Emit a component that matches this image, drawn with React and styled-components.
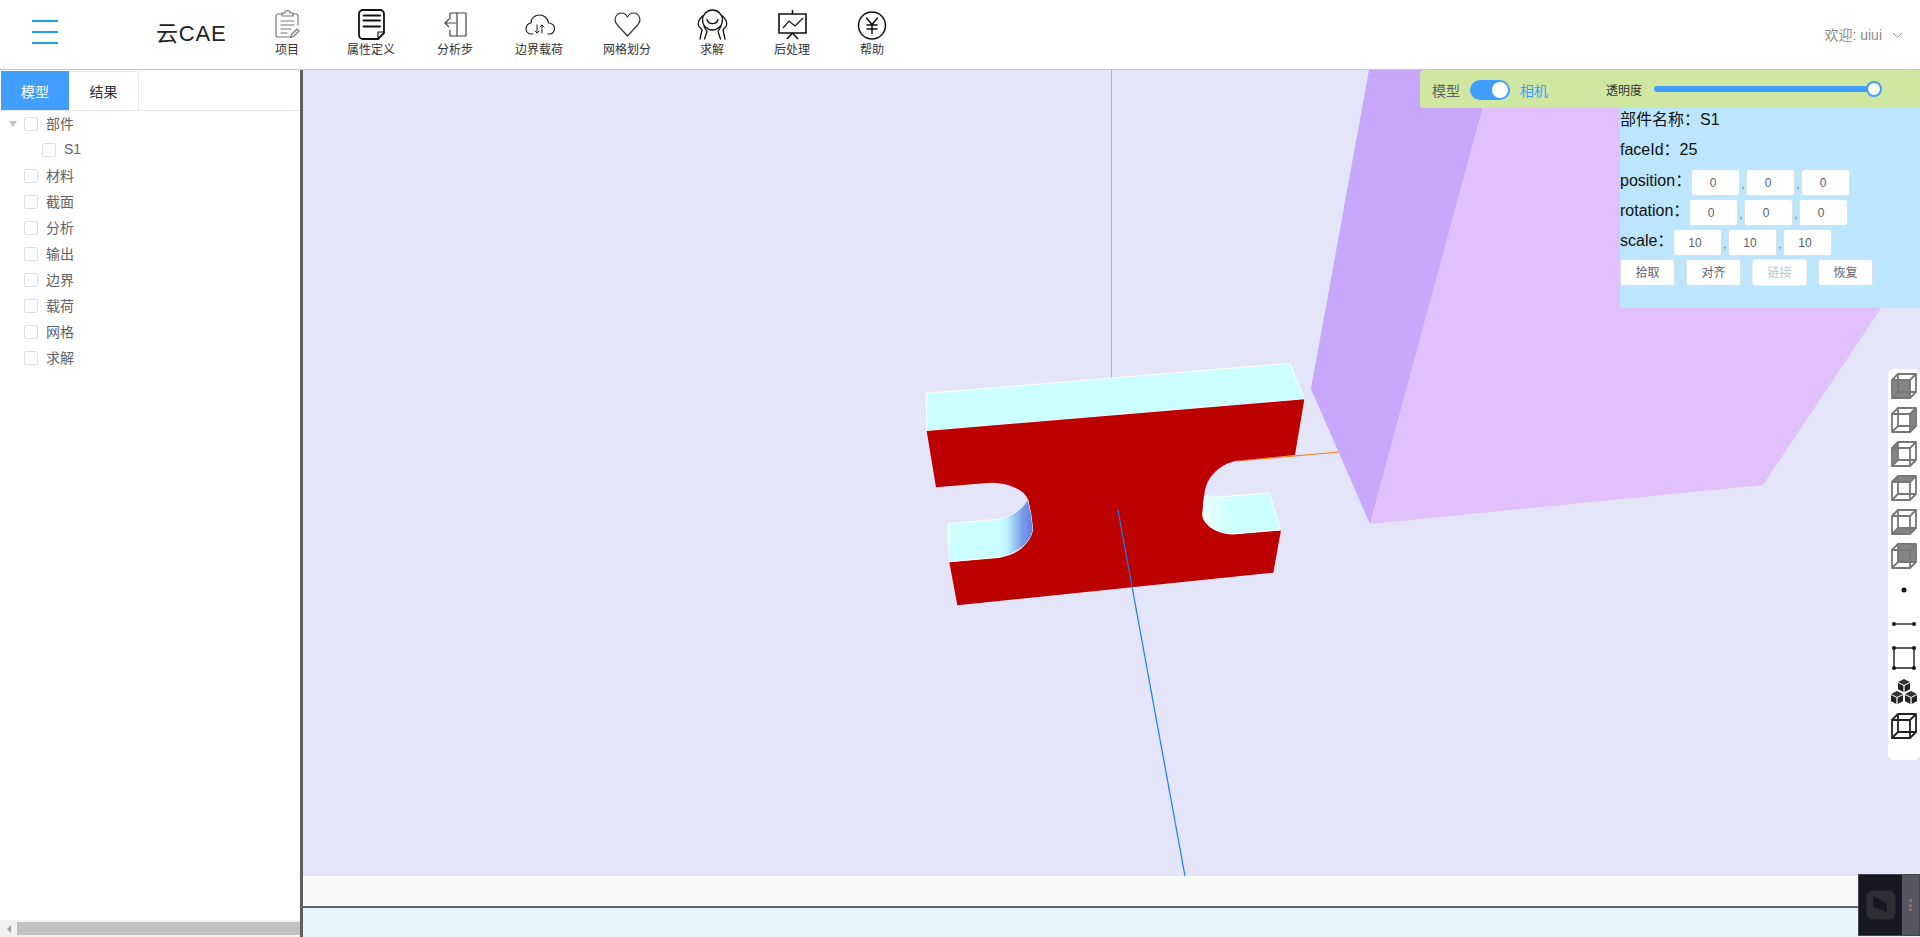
import React from "react";
import styled, { createGlobalStyle } from "styled-components";

const GlobalStyle = createGlobalStyle`
  html, body {
    margin: 0;
    padding: 0;
    overflow: hidden;
    background: #fff;
    font-family: "Liberation Sans", "Noto Sans CJK SC", sans-serif;
  }
  * { box-sizing: border-box; }
`;

const Page = styled.div`
  width: 1920px;
  height: 937px;
  display: flex;
  flex-direction: column;
  position: relative;
  overflow: hidden;
`;

/* header */
const Header = styled.header`
  height: 70px;
  flex: none;
  display: flex;
  align-items: flex-start;
  border-bottom: 1px solid #c4c4c4;
  background: #fff;
`;

const Burger = styled.div`
  width: 26px;
  margin: 20px 0 0 32px;
  display: flex;
  flex-direction: column;
  gap: 9px;
  span {
    height: 2px;
    background: #1f9fe2;
  }
`;

const Logo = styled.div`
  margin: 21px 0 0 98px;
  width: 89px;
  font-size: 22px;
  line-height: 26px;
  letter-spacing: 0.8px;
  color: #222;
`;

const Nav = styled.nav`
  display: flex;
`;

const NavItem = styled.div`
  width: ${(p) => p.$w}px;
  padding-top: 8px;
  display: flex;
  flex-direction: column;
  align-items: center;
  font-size: 12px;
  line-height: 17px;
  color: #333;
  svg {
    display: block;
    margin-bottom: 1px;
  }
`;

const User = styled.div`
  margin: 27px 17px 0 auto;
  display: flex;
  align-items: center;
  gap: 10px;
  font-size: 14px;
  line-height: 17px;
  color: #8c8c8c;
`;

/* body */
const Main = styled.div`
  flex: 1;
  display: flex;
  min-height: 0;
`;

const Sidebar = styled.aside`
  width: 303px;
  flex: none;
  display: flex;
  flex-direction: column;
  border-right: 3px solid #5f5f5f;
  background: #fff;
`;

const Tabs = styled.div`
  height: 41px;
  flex: none;
  display: flex;
  padding: 1px 0 0 1px;
  border-bottom: 1px solid #e4e7ed;
`;

const Tab = styled.div`
  width: ${(p) => (p.$active ? 68 : 70)}px;
  display: flex;
  align-items: center;
  justify-content: center;
  font-size: 14px;
  color: ${(p) => (p.$active ? "#fff" : "#303133")};
  background: ${(p) => (p.$active ? "#409eff" : "#fff")};
  border-right: ${(p) => (p.$active ? "none" : "1px solid #e4e7ed")};
  border-top: ${(p) => (p.$active ? "none" : "1px solid #e4e7ed")};
  border-top-right-radius: ${(p) => (p.$active ? 0 : 4)}px;
`;

const Tree = styled.div`
  flex: 1;
  min-height: 0;
`;

const TreeRow = styled.div`
  height: 26px;
  display: flex;
  align-items: center;
  padding-left: ${(p) => 9 + p.$level * 18}px;
  font-size: 14px;
  color: #606266;
`;

const TreeLabel = styled.span`
  margin-bottom: 2px;
`;

const Caret = styled.span`
  width: 15px;
  flex: none;
  display: block;
  height: 6px;
  &::before {
    content: "";
    display: ${(p) => (p.$show ? "block" : "none")};
    width: 0;
    height: 0;
    border-left: 4px solid transparent;
    border-right: 4px solid transparent;
    border-top: 6px solid #c0c4cc;
  }
`;

const Check = styled.span`
  width: 14px;
  height: 14px;
  flex: none;
  margin-right: 8px;
  background: #fff;
  border: 1px solid #dcdfe6;
  border-radius: 2px;
`;

const Scrollbar = styled.div`
  height: 17px;
  flex: none;
  display: flex;
  align-items: center;
  background: #f1f1f1;
`;

const ScrollArrow = styled.span`
  width: 17px;
  flex: none;
  display: flex;
  justify-content: center;
  &::before {
    content: "";
    border-top: 4px solid transparent;
    border-bottom: 4px solid transparent;
    border-right: 4px solid #a3a3a3;
  }
`;

const ScrollThumb = styled.span`
  flex: 1;
  height: 13px;
  background: #c1c1c1;
`;

const Work = styled.div`
  flex: 1;
  min-width: 0;
  display: flex;
  flex-direction: column;
`;

const Viewport = styled.div`
  flex: 1;
  min-height: 0;
  position: relative;
  overflow: hidden;
  background: #e5e5f9;
`;

const Scene = styled.svg`
  position: absolute;
  left: 0;
  top: 0;
  display: block;
`;

const StatusStrip = styled.div`
  height: 32px;
  flex: none;
  background: #fafafa;
  border-bottom: 2px solid #666;
`;

const Console = styled.div`
  height: 29px;
  flex: none;
  background: #e6f4fd;
`;

/* overlays on the viewport */
const ViewDock = styled.div`
  position: absolute;
  right: 0;
  top: 0;
  width: 500px;
  display: flex;
  flex-direction: column;
  align-items: flex-end;
`;

const ControlBar = styled.div`
  width: 500px;
  height: 38px;
  display: flex;
  align-items: center;
  padding: 2px 0 0 12px;
  background: #cfe7a1;
  border-radius: 4px;
  font-size: 14px;
  color: #606266;
`;

const SwitchLabel = styled.span`
  color: ${(p) => (p.$on ? "#409eff" : "#606266")};
`;

const Switch = styled.span`
  width: 40px;
  height: 20px;
  margin: 0 10px;
  padding: 2px;
  display: flex;
  justify-content: flex-end;
  background: #409eff;
  border-radius: 10px;
  &::after {
    content: "";
    width: 16px;
    height: 16px;
    background: #fff;
    border-radius: 50%;
  }
`;

const SliderLabel = styled.span`
  margin: 0 12px 2px 58px;
  font-size: 12px;
  color: #333;
`;

const Slider = styled.span`
  width: 228px;
  height: 6px;
  margin-bottom: 2px;
  position: relative;
  background: #409eff;
  border-radius: 3px;
`;

const SliderKnob = styled.span`
  position: absolute;
  right: 0;
  top: -5px;
  width: 16px;
  height: 16px;
  background: #fff;
  border: 2px solid #409eff;
  border-radius: 50%;
`;

const InfoPanel = styled.div`
  width: 300px;
  height: 200px;
  display: flex;
  flex-direction: column;
  background: #bbe6fe;
  color: #111;
  font-size: 16px;
`;

const InfoLine = styled.div`
  height: 30px;
  line-height: 24px;
`;

const FieldRow = styled.div`
  height: 30px;
  padding-top: 1px;
  display: flex;
  align-items: flex-start;
  line-height: 24px;
`;

const FieldLabel = styled.span`
  width: ${(p) => p.$w}px;
  flex: none;
`;

const FieldInput = styled.span`
  width: 49px;
  height: 27px;
  display: flex;
  align-items: center;
  justify-content: center;
  padding-right: 5px;
  background: #fff;
  border: 1px solid #dcdfe6;
  border-radius: 3px;
  font-size: 12px;
  color: #606266;
`;

const Comma = styled.span`
  width: 6px;
  font-size: 10px;
  line-height: 32px;
  text-align: center;
  color: #606266;
`;

const ActionRow = styled.div`
  display: flex;
  gap: 11px;
  padding-top: 1px;
`;

const ActionButton = styled.span`
  width: 55px;
  height: 27px;
  padding-bottom: 2px;
  display: flex;
  align-items: center;
  justify-content: center;
  background: #fff;
  border: 1px solid ${(p) => (p.$disabled ? "#ebeef5" : "#dcdfe6")};
  border-radius: 3px;
  font-size: 12px;
  color: ${(p) => (p.$disabled ? "#c0c4cc" : "#606266")};
`;

const ViewTools = styled.div`
  position: absolute;
  right: 0;
  top: 299px;
  width: 32px;
  padding-bottom: 17px;
  display: flex;
  flex-direction: column;
  background: #fff;
  border-radius: 6px;
`;

const ToolSlot = styled.div`
  height: 34px;
  display: flex;
  align-items: center;
  justify-content: center;
`;

/* corner widget over everything */
const RecorderWidget = styled.div`
  position: absolute;
  right: 0;
  bottom: 1px;
  width: 62px;
  height: 62px;
  display: flex;
  background: #17181f;
  border: 1px solid #45464d;
`;

const RecorderMain = styled.div`
  flex: 1;
  display: flex;
  align-items: center;
  justify-content: center;
`;

const RecorderHandle = styled.div`
  width: 17px;
  display: flex;
  flex-direction: column;
  align-items: center;
  justify-content: center;
  gap: 1.5px;
  background: #555662;
  span {
    width: 3px;
    height: 3px;
    background: #a5705a;
    border-radius: 50%;
  }
`;

const navStroke = { fill: "none", stroke: "#2b2b2b", strokeWidth: 1.2, strokeLinecap: "round", strokeLinejoin: "round" };

const navIcons = {
  project: (
    <g {...navStroke} stroke="#777">
      <path d="M11 6H7a2 2 0 0 0-2 2v19a2 2 0 0 0 2 2h12" />
      <path d="M22 6h3a2 2 0 0 1 2 2v9" />
      <path d="M11 8V5h3a2.5 2.5 0 0 1 5 0h3v3z" />
      <path d="M10 13h13M10 17h13M10 21h10M10 25h6" />
      <path d="M19.500 29.500l1-3 5.500-5.500 2 2-5.500 5.500z" />
    </g>
  ),
  attr: (
    <g {...navStroke} stroke="#111" strokeWidth="1.8">
      <path d="M8 2h17a4 4 0 0 1 4 4v19l-6 6H8a4 4 0 0 1-4-4V6a4 4 0 0 1 4-4z" />
      <path d="M8.500 7.500h16.500M8.500 12.500h16.500M8.500 18.500h16.500" />
      <path d="M23 30v-6h6" strokeWidth="1.2" />
    </g>
  ),
  step: (
    <g {...navStroke} stroke="#444">
      <path d="M11 11V5h16v23H11v-6" />
      <path d="M18 5v23" />
      <path d="M6 15h11M6 15l3.500-3.500M6 15l3.500 3.500" />
    </g>
  ),
  load: (
    <g {...navStroke} stroke="#222">
      <path d="M10 26H8c-3.500 0-5-3-5-5.500S5 15 8 15c0-5 4-8 8.500-8S25 10.500 25.500 15c3.500 0 6 2.500 6 5.500S29.500 26 27 26h-2" />
      <path d="M14 17v8M12 23l2 2 2-2M19 25v-8M17 19l2-2 2 2" strokeWidth="1" />
    </g>
  ),
  mesh: (
    <path {...navStroke} stroke="#333" d="M16.500 28L6 16.500C2 11.500 5 5 10.500 5c2.800 0 4.800 1.800 6 4 1.200-2.200 3.200-4 6-4C28 5 31 11.500 27 16.500z" />
  ),
  solve: (
    <g {...navStroke} stroke="#111" strokeWidth="1.3">
      <circle cx="16.500" cy="12" r="10" />
      <path d="M11 11.500c1.500 5.500 9.500 5.500 11 0" />
      <path d="M6.500 8C3 11 1 15.500 3 18.500c.8 1.300 2.500 1.800 3 3.500l-2 9" />
      <path d="M8 18.500l3 5-2.500 7.500" />
      <path d="M26.500 8C30 11 32 15.500 30 18.500c-.8 1.300-2.500 1.800-3 3.500l2 9" />
      <path d="M25 18.500l-3 5 2.500 7.500" />
    </g>
  ),
  post: (
    <g {...navStroke} stroke="#111" strokeWidth="1.6" strokeLinecap="butt" strokeLinejoin="miter">
      <path d="M3 6h27v19H3z" />
      <path d="M16.500 2v4M16.500 25l-5.500 6M16.500 25l5.500 6" />
      <path d="M7 20l6-7 6 5 8-8" strokeWidth="1.2" />
    </g>
  ),
  help: (
    <g {...navStroke} stroke="#111" strokeWidth="1.5">
      <circle cx="16" cy="17.500" r="13.500" />
      <path d="M10.500 10L16 16.500l5.500-6.500M11 17h10M11 21h10M16 16.500v9" />
    </g>
  ),
};

const navList = [
  ["项目", 84, "project"],
  ["属性定义", 84, "attr"],
  ["分析步", 84, "step"],
  ["边界载荷", 84, "load"],
  ["网格划分", 92, "mesh"],
  ["求解", 78, "solve"],
  ["后处理", 82, "post"],
  ["帮助", 78, "help"],
];

const treeList = [
  ["部件", 0, true],
  ["S1", 1],
  ["材料", 0],
  ["截面", 0],
  ["分析", 0],
  ["输出", 0],
  ["边界", 0],
  ["载荷", 0],
  ["网格", 0],
  ["求解", 0],
];

const faces = {
  front: "1,7 19,7 19,25 1,25",
  back: "7,1 25,1 25,19 7,19",
  right: "19,7 25,1 25,19 19,25",
  left: "1,7 7,1 7,19 1,25",
  top: "1,7 7,1 25,1 19,7",
  bottom: "1,25 7,19 25,19 19,25",
};

const Cube = ({ face, color = "#777", width = 1.8 }) => (
  <svg width="26" height="26" viewBox="0 0 26 26">
    {face && <polygon points={faces[face]} fill="#858585" />}
    <g fill="none" stroke={color} strokeWidth={width} strokeLinejoin="round">
      <path d="M7 1h18v18H7z" />
      <path d="M1 7h18v18H1z" />
      <path d="M1 7l6-6M19 7l6-6M19 25l6-6M1 25l6-6" />
    </g>
  </svg>
);

const PointIcon = () => (
  <svg width="26" height="26" viewBox="0 0 26 26">
    <circle cx="13" cy="13" r="2.500" fill="#111" />
  </svg>
);

const EdgeIcon = () => (
  <svg width="26" height="26" viewBox="0 0 26 26">
    <path d="M3 13h20" stroke="#222" strokeWidth="1.4" />
    <circle cx="3" cy="13" r="2" fill="#111" />
    <circle cx="23" cy="13" r="2" fill="#111" />
  </svg>
);

const FaceIcon = () => (
  <svg width="26" height="26" viewBox="0 0 26 26">
    <path d="M3 3h20v20H3z" fill="none" stroke="#222" strokeWidth="1.4" />
    <circle cx="3" cy="3" r="2" fill="#111" />
    <circle cx="23" cy="3" r="2" fill="#111" />
    <circle cx="3" cy="23" r="2" fill="#111" />
    <circle cx="23" cy="23" r="2" fill="#111" />
  </svg>
);

const SmallCube = ({ x, y }) => (
  <g transform={`translate(${x} ${y})`}>
    <path d="M6 0l6 3-6 3-6-3z" fill="#333" />
    <path d="M0 4l5.400 2.700V13L0 10.300z" fill="#222" />
    <path d="M12 4L6.600 6.700V13L12 10.300z" fill="#222" />
  </g>
);

const BodiesIcon = () => (
  <svg width="26" height="26" viewBox="0 0 26 26">
    <SmallCube x={7} y={0} />
    <SmallCube x={0} y={12} />
    <SmallCube x={14} y={12} />
  </svg>
);

const Model = () => (
  <g transform="translate(-303 -70)">
    <polygon points="1369,70 1493,70 1370,524 1311,389" fill="#c7a8fc" />
    <polygon points="1493,70 1920,70 1920,250 1763,485 1370,524" fill="#e2c0fe" />
    <line x1="1111.500" y1="70" x2="1111.500" y2="378" stroke="#93d84a" strokeWidth="1" />
    <line x1="1237" y1="461" x2="1339" y2="452" stroke="#f5821f" strokeWidth="1.2" />
    <g transform="translate(900 340) scale(0.33333)" strokeLinejoin="round">
      <defs>
        <linearGradient id="leftSlot" x1="295" x2="398" y1="0" y2="0" gradientUnits="userSpaceOnUse">
          <stop offset="0" stopColor="#ccffff" />
          <stop offset="0.25" stopColor="#bdf2ff" />
          <stop offset="0.7" stopColor="#7a9cea" />
          <stop offset="1" stopColor="#5f80e0" />
        </linearGradient>
        <linearGradient id="rightSlot" x1="908" x2="1000" y1="0" y2="0" gradientUnits="userSpaceOnUse">
          <stop offset="0" stopColor="#ebffff" />
          <stop offset="1" stopColor="#ccffff" />
        </linearGradient>
      </defs>
      <polygon points="79,160 1170,70 1213,178 80,273" fill="#ccffff" stroke="#fff" strokeWidth="3" />
      <path
        d="M80 273L1213 178 1185 345 1010 362C960 372 916 410 913 468L908 525C912 560 960 582 1000 582L1143 570 1120 698 172 796 148 667 300 652C340 648 385 625 398 567L385 480C370 445 320 428 270 428L108 442Z"
        fill="#bc0000"
      />
      <path
        d="M145 551L295 538C330 532 365 512 383 480L392 520 398 567C392 610 355 635 300 652L148 665Z"
        fill="#ccffff"
        stroke="#fff"
        strokeWidth="3"
      />
      <path d="M295 538C330 532 365 512 383 480L392 520 398 567C392 610 355 635 300 652Z" fill="url(#leftSlot)" />
      <path
        d="M913 468L970 470 1108 459 1143 570 1000 582C960 582 912 560 908 525Z"
        fill="#ccffff"
        stroke="#fff"
        strokeWidth="3"
      />
      <path d="M913 468L970 470 1000 582C960 582 912 560 908 525Z" fill="url(#rightSlot)" />
    </g>
    <line x1="1185" y1="876" x2="1118" y2="510" stroke="#1a7ff0" strokeWidth="1.2" />
  </g>
);

export default function App() {
  return (
    <Page>
      <GlobalStyle />
      <Header>
        <Burger>
          <span />
          <span />
          <span />
        </Burger>
        <Logo>云CAE</Logo>
        <Nav>
          {navList.map(([label, w, icon]) => (
            <NavItem key={label} $w={w}>
              <svg width="33" height="33" viewBox="0 0 33 33">
                {navIcons[icon]}
              </svg>
              {label}
            </NavItem>
          ))}
        </Nav>
        <User>
          欢迎: uiui
          <svg width="11" height="7" viewBox="0 0 11 7">
            <path d="M1 1l4.500 4.500L10 1" fill="none" stroke="#909399" strokeWidth="1" />
          </svg>
        </User>
      </Header>
      <Main>
        <Sidebar>
          <Tabs>
            <Tab $active>模型</Tab>
            <Tab>结果</Tab>
          </Tabs>
          <Tree>
            {treeList.map(([label, level, open]) => (
              <TreeRow key={label} $level={level}>
                <Caret $show={open} />
                <Check />
                <TreeLabel>{label}</TreeLabel>
              </TreeRow>
            ))}
          </Tree>
          <Scrollbar>
            <ScrollArrow />
            <ScrollThumb />
          </Scrollbar>
        </Sidebar>
        <Work>
          <Viewport>
            <Scene width="1617" height="806" viewBox="0 0 1617 806">
              <Model />
            </Scene>
            <ViewDock>
              <ControlBar>
                <SwitchLabel>模型</SwitchLabel>
                <Switch />
                <SwitchLabel $on>相机</SwitchLabel>
                <SliderLabel>透明度</SliderLabel>
                <Slider>
                  <SliderKnob />
                </Slider>
              </ControlBar>
              <InfoPanel>
                <InfoLine>部件名称：S1</InfoLine>
                <InfoLine>faceId：25</InfoLine>
                <FieldRow>
                  <FieldLabel $w={71}>position：</FieldLabel>
                  <FieldInput>0</FieldInput>
                  <Comma>,</Comma>
                  <FieldInput>0</FieldInput>
                  <Comma>,</Comma>
                  <FieldInput>0</FieldInput>
                </FieldRow>
                <FieldRow>
                  <FieldLabel $w={69}>rotation：</FieldLabel>
                  <FieldInput>0</FieldInput>
                  <Comma>,</Comma>
                  <FieldInput>0</FieldInput>
                  <Comma>,</Comma>
                  <FieldInput>0</FieldInput>
                </FieldRow>
                <FieldRow>
                  <FieldLabel $w={53}>scale：</FieldLabel>
                  <FieldInput>10</FieldInput>
                  <Comma>,</Comma>
                  <FieldInput>10</FieldInput>
                  <Comma>,</Comma>
                  <FieldInput>10</FieldInput>
                </FieldRow>
                <ActionRow>
                  <ActionButton>拾取</ActionButton>
                  <ActionButton>对齐</ActionButton>
                  <ActionButton $disabled>链接</ActionButton>
                  <ActionButton>恢复</ActionButton>
                </ActionRow>
              </InfoPanel>
            </ViewDock>
            <ViewTools>
              {["front", "right", "left", "top", "bottom", "back"].map((face) => (
                <ToolSlot key={face}>
                  <Cube face={face} />
                </ToolSlot>
              ))}
              <ToolSlot>
                <PointIcon />
              </ToolSlot>
              <ToolSlot>
                <EdgeIcon />
              </ToolSlot>
              <ToolSlot>
                <FaceIcon />
              </ToolSlot>
              <ToolSlot>
                <BodiesIcon />
              </ToolSlot>
              <ToolSlot>
                <Cube color="#222" />
              </ToolSlot>
            </ViewTools>
          </Viewport>
          <StatusStrip />
          <Console />
        </Work>
      </Main>
      <RecorderWidget>
        <RecorderMain>
          <svg width="30" height="30" viewBox="0 0 30 30">
            <rect width="29" height="29" x="0.500" y="0.500" rx="7" fill="#2e2f35" />
            <path d="M7 6l14 7-14 5z" fill="#17181f" />
            <path d="M21 11v12L8 17z" fill="#17181f" />
          </svg>
        </RecorderMain>
        <RecorderHandle>
          <span />
          <span />
          <span />
        </RecorderHandle>
      </RecorderWidget>
    </Page>
  );
}
